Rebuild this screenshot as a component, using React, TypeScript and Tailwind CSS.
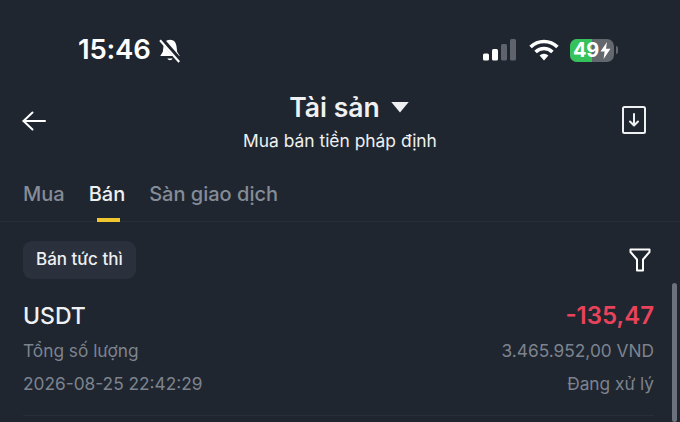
import React from 'react';

const font = { fontFamily: 'Inter, "Noto Sans", sans-serif' };

const CellSignal = () => (
  <svg width="36" height="22" viewBox="0 0 36 22">
    <rect x="1" y="14.5" width="6" height="7" rx="1.5" fill="#fff" />
    <rect x="10" y="10" width="6" height="11.5" rx="1.5" fill="#fff" />
    <rect x="19" y="5" width="6" height="16.5" rx="1.5" fill="#5f646c" />
    <rect x="28" y="0" width="6" height="21.5" rx="1.5" fill="#5f646c" />
  </svg>
);

const Wifi = () => (
  <svg width="30" height="22" viewBox="0 0 30 22" fill="none" stroke="#fff" strokeWidth="3.6">
    <path d="M1.6 8 A19 19 0 0 1 28.4 8" />
    <path d="M6.6 13 A12 12 0 0 1 23.4 13" />
    <path d="M15 21.5 L10.6 16.6 A6.4 6.4 0 0 1 19.4 16.6 Z" fill="#fff" stroke="none" />
  </svg>
);

const Battery = () => (
  <div className="flex items-center gap-[2px]">
    <div className="relative w-[44px] h-[23px] rounded-[7px] bg-[#63676e] overflow-hidden">
      <div className="absolute left-0 top-0 h-full w-[22px] bg-[#35c25a]" />
      <div className="relative flex items-center h-full pl-[3px] text-white font-bold text-[20px] leading-none tracking-[-0.2px]">
        49
        <svg width="11" height="17" viewBox="0 0 11 17" className="ml-[1px]">
          <path d="M7 0 L0.5 9.6 H4.6 L3.6 17 L10.5 6.8 H6 Z" fill="#fff" />
        </svg>
      </div>
    </div>
    <div className="w-[2px] h-[8px] rounded-r bg-[#63676e]" />
  </div>
);

const BellOff = () => (
  <svg width="26" height="26" viewBox="0 0 24 24" fill="none">
    <path d="M12 2.5c3.6 0 5.6 2.6 6 6l.6 5 2.4 4H3l2.4-4 .6-5c.4-3.4 2.400-6 6-6z" fill="#fff" />
    <path d="M9.500 19.800a2.700 2.700 0 0 0 5 0z" fill="#fff" />
    <path d="M3.500 1.500L21.500 22" stroke="#1f2630" strokeWidth="4.500" />
    <path d="M2.800 3L20.500 23" stroke="#fff" strokeWidth="2" />
  </svg>
);

const BackArrow = () => (
  <svg width="24" height="20" viewBox="0 0 24 20" fill="none" stroke="#fff" strokeWidth="2" strokeLinecap="round" strokeLinejoin="round">
    <path d="M1.500 10H23" />
    <path d="M10.500 1.500L1.500 10l9 8.500" />
  </svg>
);

const Download = () => (
  <svg width="24" height="28" viewBox="0 0 24 28" fill="none" stroke="#eef0f2" strokeWidth="2">
    <rect x="1" y="1" width="22" height="26" rx="1.500" />
    <path d="M12 8v11" strokeLinecap="round" />
    <path d="M8 15.500l4 4 4-4" strokeLinecap="round" strokeLinejoin="round" />
  </svg>
);

const Filter = () => (
  <svg width="22" height="24" viewBox="0 0 22 24" fill="none" stroke="#fff" strokeWidth="2" strokeLinejoin="round">
    <path d="M1.500 1.500H20.500V4L14 11.500V22.500H8V11.500L1.500 4Z" />
  </svg>
);

export default function App() {
  return (
    <div className="relative w-[680px] h-[422px] overflow-hidden bg-[#1f2630] text-white" style={font}>
      {/* Status bar */}
      <div className="flex items-center justify-between h-[70px] pt-[30px] pl-[78px] pr-[62px]">
        <div className="flex items-center gap-[6px]">
          <span className="text-[27.5px] font-semibold leading-none tracking-[-0.2px]">15:46</span>
          <BellOff />
        </div>
        <div className="flex items-center gap-[11px]">
          <CellSignal />
          <Wifi />
          <Battery />
        </div>
      </div>

      {/* Header */}
      <div className="flex items-start justify-between h-[104px] pl-[22px] pr-[34px] pt-[19px]">
        <div className="pt-[22px]"><BackArrow /></div>
        <div className="flex flex-col items-center ml-[12px]">
          <div className="flex items-center gap-[10px] h-[36px] ml-[19px]">
            <span className="text-[26.5px] font-semibold text-[#eef0f2] leading-none">Tài sản</span>
            <svg width="20" height="12" viewBox="0 0 18 11"><path d="M1 1h16l-8 9.500z" fill="#eef0f2" /></svg>
          </div>
          <span className="mt-[6px] text-[17.4px] leading-[20px] text-[#eef0f2]">Mua bán tiền pháp định</span>
        </div>
        <div className="pt-[17px]"><Download /></div>
      </div>

      {/* Tabs */}
      <div className="flex gap-[24px] h-[48px] px-[23px] pt-[7px] border-b border-[#272e38] text-[20px] leading-[26px]">
        <span className="text-[#858c97] font-medium">Mua</span>
        <div className="relative">
          <span className="text-[#eef0f2] font-medium">Bán</span>
          <div className="absolute left-[8px] top-[37px] w-[23px] h-[4px] bg-[#f0c62f]" />
        </div>
        <span className="text-[#858c97] font-medium">Sàn giao dịch</span>
      </div>

      {/* Filter row */}
      <div className="flex items-center justify-between h-[38px] mt-[19px] pl-[23px] pr-[29px]">
        <div className="flex items-center h-[38px] px-[13px] rounded-[9px] bg-[#2a313c] text-[17px] text-[#eef0f2] font-medium">Bán tức thì</div>
        <Filter />
      </div>

      {/* Order row */}
      <div className="ml-[23px] mr-[26px] mt-[22px] pb-[18px] border-b border-[#272e38]">
        <div className="flex items-center justify-between h-[30px] text-[23px] font-medium">
          <span className="text-[#eef0f2]">USDT</span>
          <span className="text-[24px] text-[#e8435a] font-semibold">-135,47</span>
        </div>
        <div className="flex items-center justify-between h-[26px] mt-[7px] text-[17.3px] text-[#7d838e]">
          <span>Tổng số lượng</span>
          <span>3.465.952,00 VND</span>
        </div>
        <div className="flex items-center justify-between h-[26px] mt-[7px] text-[17.3px] text-[#7d838e]">
          <span>2026-08-25 22:42:29</span>
          <span>Đang xử lý</span>
        </div>
      </div>

      {/* Scrollbar */}
      <div className="absolute left-[672px] top-[283px] w-[5px] h-[139px] rounded-full bg-[#6c727b]" />
    </div>
  );
}
